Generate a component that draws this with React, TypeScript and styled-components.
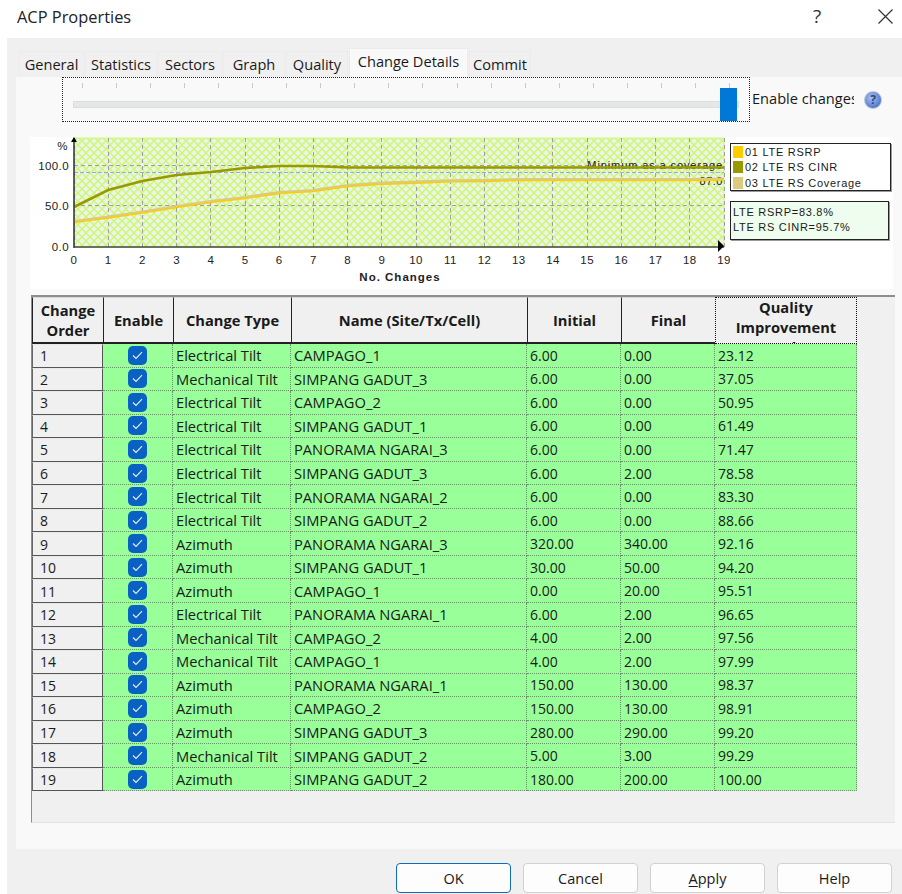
import React from "react";
import styled, { createGlobalStyle } from "styled-components";

const GlobalStyle = createGlobalStyle`
  html, body {
    margin: 0;
    padding: 0;
    background: #ffffff;
  }
  * {
    box-sizing: border-box;
  }
`;

const Dialog = styled.div`
  width: 902px;
  height: 894px;
  overflow: hidden;
  display: flex;
  flex-direction: column;
  font-family: "Open Sans", "Noto Sans", sans-serif;
  font-size: 14px;
  color: #1a1a1a;
`;

const TitleBar = styled.div`
  height: 38px;
  flex: none;
  display: flex;
  align-items: center;
  padding: 0 2px 6px 17px;
  font-size: 16.4px;
  color: #222;
`;

const Title = styled.div`
  flex: 1;
`;

const TitleButton = styled.div`
  width: 30px;
  height: 24px;
  margin-left: 38px;
  display: flex;
  align-items: center;
  justify-content: center;
  font-size: 19px;
  color: #333;
`;

const Body = styled.div`
  flex: 1;
  margin-left: 7px;
  padding: 10px 0 0 9px;
  background: #f0f0f0;
  display: flex;
  flex-direction: column;
`;

const TabStrip = styled.div`
  height: 29px;
  flex: none;
  display: flex;
  align-items: flex-end;
  padding-left: 3px;
  gap: 1px;
`;

const Tab = styled.div<{ $active?: boolean; $w: number }>`
  width: ${(p) => p.$w}px;
  height: ${(p) => (p.$active ? 29 : 26)}px;
  padding-bottom: ${(p) => (p.$active ? 4 : 2)}px;
  display: flex;
  align-items: center;
  justify-content: center;
  background: ${(p) => (p.$active ? "#f9f9f9" : "#f0f0f0")};
  border: 1px solid #ebebeb;
  border-bottom: none;
  font-size: 14.6px;
  white-space: nowrap;
`;

const Panel = styled.div`
  height: 772px;
  flex: none;
  background: #f9f9f9;
  display: flex;
  flex-direction: column;
`;

const SliderRow = styled.div`
  height: 45px;
  flex: none;
  display: flex;
  align-items: flex-start;
  padding-left: 46px;
`;

const SliderFrame = styled.div`
  width: 688px;
  height: 45px;
  border: 1px dotted #222;
  position: relative;
  padding: 5px 10px 0;
`;

const Ticks = styled.div`
  display: flex;
  justify-content: space-between;
  padding: 0 8px 0 9px;
  margin-right: 1px;
`;

const Tick = styled.span`
  width: 1px;
  height: 5px;
  background: #c8c8c8;
`;

const Track = styled.div`
  height: 7px;
  margin-top: 13px;
  background: #e6e7e7;
  border: 1px solid #dcdddd;
`;

const Thumb = styled.div`
  position: absolute;
  right: 12px;
  top: 10px;
  width: 17px;
  height: 33px;
  background: #0078d7;
`;

const EnableLabel = styled.div`
  width: 102px;
  margin: 11px 0 0 2px;
  overflow: hidden;
  white-space: nowrap;
  font-size: 14.6px;
`;

const HelpBadge = styled.div`
  width: 18px;
  height: 18px;
  margin: 14px 0 0 10px;
  border-radius: 50%;
  background: radial-gradient(circle at 40% 35%, #a9c2ee, #4f78c8 75%);
  border: 1px solid #b9c6dd;
  color: #2a4a8a;
  font-size: 12px;
  font-weight: 700;
  line-height: 16px;
  text-align: center;
`;

const ChartBand = styled.div`
  width: 863px;
  height: 152px;
  flex: none;
  margin: 15px 0 6px 14px;
  background: #ffffff;
  display: flex;
`;

const LegendColumn = styled.div`
  display: flex;
  flex-direction: column;
  gap: 10px;
  padding-top: 6px;
  font-family: "Liberation Sans", Arial, sans-serif;
  font-size: 11px;
  letter-spacing: 0.72px;
`;

const LegendBox = styled.div`
  width: 161px;
  height: 48px;
  padding: 0 0 0 2px;
  background: #ffffff;
  border: 1px solid #222;
  box-shadow: 1px 1px 0 #999;
`;

const LegendItem = styled.div`
  height: 15.6px;
  display: flex;
  align-items: center;
  gap: 2px;
  white-space: nowrap;
`;

const Swatch = styled.span<{ $color: string }>`
  width: 10px;
  height: 12px;
  background: ${(p) => p.$color};
`;

const ReadoutBox = styled.div`
  width: 159px;
  height: 39px;
  padding: 3px 0 0 2px;
  background: #eefdee;
  border: 1px solid #222;
  box-shadow: 1px 1px 0 #999;
  line-height: 15px;
  white-space: nowrap;
`;

const GridFrame = styled.div`
  height: 528px;
  flex: none;
  margin-left: 15px;
  margin-right: 7px;
  background: #f0f0f0;
  border-top: 2px solid #8e8e8e;
  border-left: 1px solid #8e8e8e;
  border-bottom: 1px solid #e2e2e2;
  display: flex;
  flex-direction: column;
`;

const GridRow = styled.div`
  display: grid;
  grid-template-columns: 71px 70px 118px 236px 94px 94px 142px;
  width: 825px;
`;

const HeaderCell = styled.div<{ $focus?: boolean }>`
  height: 47px;
  display: flex;
  align-items: ${(p) => (p.$focus ? "flex-start" : "center")};
  justify-content: center;
  overflow: hidden;
  padding: ${(p) => (p.$focus ? "0 4px" : "0 2px")};
  text-align: center;
  font-weight: 700;
  font-size: 14.7px;
  line-height: 20px;
  background: #f0f0f0;
  border-top: 1px solid #d8d8d8;
  border-left: 1px solid #222;
  border-bottom: 2px solid #222;
  ${(p) => p.$focus && "border: 1px dotted #111; border-bottom: 1px dotted #111;"}
`;

// the sort column's caption is taller than the header and runs under its edge
const OverflowCaption = styled.span`
  display: block;
  margin-top: -1px;
`;

const RowHead = styled.div`
  height: 23.55px;
  padding: 0 0 0 7px;
  display: flex;
  align-items: center;
  background: #f0f0f0;
  border-left: 1px solid #666;
  border-top: 1px solid #e8e8e8;
  border-bottom: 1px solid #555;
  border-right: 1px solid #555;
  font-size: 14px;
`;

const Cell = styled.div<{ $num?: boolean }>`
  height: 23.55px;
  padding: 0 0 0 3px;
  display: flex;
  align-items: center;
  overflow: hidden;
  white-space: nowrap;
  background: #99ff99;
  border-right: 1px dotted #6d8f6d;
  border-bottom: 1px dotted #6d8f6d;
  font-size: ${(p) => (p.$num ? 14 : 14.7)}px;
`;

const CheckCell = styled(Cell)`
  justify-content: center;
  padding: 0;
`;

const CheckMark = styled.span`
  width: 19px;
  height: 19px;
  display: flex;
  align-items: center;
  justify-content: center;
  border-radius: 5px;
  background: #0a61c4;
`;

const Footer = styled.div`
  flex: 1;
  display: flex;
  justify-content: flex-end;
  align-items: flex-end;
  gap: 12px;
  padding: 0 10px 1px 0;
`;

const DialogButton = styled.div<{ $primary?: boolean }>`
  width: 115px;
  height: 30px;
  display: flex;
  align-items: center;
  justify-content: center;
  background: #fdfdfd;
  border-radius: 4px;
  border: 1px solid ${(p) => (p.$primary ? "#0f6cbd" : "#d2d2d2")};
  font-size: 14.5px;
  u {
    text-underline-offset: 2px;
  }
`;

type Row = [string, string, string, string, string];

const ROWS: Row[] = [
  ["Electrical Tilt", "CAMPAGO_1", "6.00", "0.00", "23.12"],
  ["Mechanical Tilt", "SIMPANG GADUT_3", "6.00", "0.00", "37.05"],
  ["Electrical Tilt", "CAMPAGO_2", "6.00", "0.00", "50.95"],
  ["Electrical Tilt", "SIMPANG GADUT_1", "6.00", "0.00", "61.49"],
  ["Electrical Tilt", "PANORAMA NGARAI_3", "6.00", "0.00", "71.47"],
  ["Electrical Tilt", "SIMPANG GADUT_3", "6.00", "2.00", "78.58"],
  ["Electrical Tilt", "PANORAMA NGARAI_2", "6.00", "0.00", "83.30"],
  ["Electrical Tilt", "SIMPANG GADUT_2", "6.00", "0.00", "88.66"],
  ["Azimuth", "PANORAMA NGARAI_3", "320.00", "340.00", "92.16"],
  ["Azimuth", "SIMPANG GADUT_1", "30.00", "50.00", "94.20"],
  ["Azimuth", "CAMPAGO_1", "0.00", "20.00", "95.51"],
  ["Electrical Tilt", "PANORAMA NGARAI_1", "6.00", "2.00", "96.65"],
  ["Mechanical Tilt", "CAMPAGO_2", "4.00", "2.00", "97.56"],
  ["Mechanical Tilt", "CAMPAGO_1", "4.00", "2.00", "97.99"],
  ["Azimuth", "PANORAMA NGARAI_1", "150.00", "130.00", "98.37"],
  ["Azimuth", "CAMPAGO_2", "150.00", "130.00", "98.91"],
  ["Azimuth", "SIMPANG GADUT_3", "280.00", "290.00", "99.20"],
  ["Mechanical Tilt", "SIMPANG GADUT_2", "5.00", "3.00", "99.29"],
  ["Azimuth", "SIMPANG GADUT_2", "180.00", "200.00", "100.00"],
];

const TABS: [string, number][] = [
  ["General", 65],
  ["Statistics", 72],
  ["Sectors", 64],
  ["Graph", 62],
  ["Quality", 62],
  ["Change Details", 119],
  ["Commit", 62],
];

// plot coordinates: origin of the svg sits at the chart band's corner
const PLOT_L = 44;
const PLOT_R = 694;
const PLOT_T = 1;
const PLOT_B = 110;
const STEP = (PLOT_R - PLOT_L) / 19;

const CINR = [70, 53, 44, 38, 35, 31, 29, 29, 30.5, 30.5, 30.5, 30.5, 30.5, 30.5, 30.5, 30.5, 30.5, 30.5, 30.5, 30.5];
const RSRP = [84, 79.5, 74.5, 69, 64, 60, 55, 53, 48, 45.7, 44.7, 43.3, 43, 42, 42, 42, 42, 42, 42, 41.5];

const toPoints = (ys: number[]) =>
  ys.map((y, i) => `${PLOT_L + i * STEP},${y}`).join(" ");

const Chart = () => (
  <svg width="700" height="152" viewBox="0 0 700 152" style={{ flex: "none" }}>
    <defs>
      <pattern id="hatch" width="8" height="8" patternUnits="userSpaceOnUse">
        <rect width="8" height="8" fill="#eef2e8" />
        <path d="M0 0L8 8M8 0L0 8" stroke="#c8fa6e" strokeWidth="1.3" />
      </pattern>
    </defs>
    <rect x={PLOT_L} y={PLOT_T} width={PLOT_R - PLOT_L} height={PLOT_B - PLOT_T} fill="url(#hatch)" stroke="#c8fa6e" />
    <g shapeRendering="crispEdges">
      {Array.from({ length: 20 }, (_, i) => (
        <line key={i} x1={PLOT_L + i * STEP} x2={PLOT_L + i * STEP} y1={PLOT_T} y2={PLOT_B + 3} stroke="#a0a0a0" strokeDasharray="4 3" />
      ))}
      <line x1={PLOT_L} x2={PLOT_R} y1={28.5} y2={28.5} stroke="#a0a0a0" strokeDasharray="4 3" />
      <line x1={PLOT_L} x2={PLOT_R} y1={68.5} y2={68.5} stroke="#a0a0a0" strokeDasharray="4 3" />
      <line x1={PLOT_L} x2={PLOT_R} y1={35.5} y2={35.5} stroke="#9aa6f0" strokeDasharray="4 2" />
    </g>
    <g fontFamily="Liberation Sans, Arial, sans-serif" fontSize="11" fill="#222">
      <text x={PLOT_R - 1} y="32" textAnchor="end" letterSpacing="0.9">Minimum as a coverage</text>
      <text x={PLOT_R - 1} y="48" textAnchor="end" letterSpacing="0.5">87.0</text>
    </g>
    <polyline points={toPoints(RSRP)} transform="translate(0 1)" fill="none" stroke="#ffcc00" strokeWidth="2.4" />
    <polyline points={toPoints(RSRP)} fill="none" stroke="#dccb7e" strokeWidth="2.2" />
    <polyline points={toPoints(CINR)} fill="none" stroke="#999900" strokeWidth="2.6" />
    <line x1={PLOT_L} x2={PLOT_L} y1={PLOT_T} y2={PLOT_B + 1} stroke="#333" strokeWidth="1.5" />
    <line x1={PLOT_L} x2={PLOT_R} y1={PLOT_B} y2={PLOT_B} stroke="#444" strokeWidth="1.5" />
    <path d={`M${PLOT_L - 3} 5L${PLOT_L} 0L${PLOT_L + 3} 5Z`} fill="#000" />
    <path d={`M${PLOT_R - 6} 103L${PLOT_R} 109L${PLOT_R - 6} 115Z`} fill="#000" />
    <g fontFamily="Liberation Sans, Arial, sans-serif" fontSize="11.5" fill="#222" letterSpacing="0.4">
      <text x={PLOT_L - 6} y="13" textAnchor="end">%</text>
      <text x={PLOT_L - 5} y="33" textAnchor="end">100.0</text>
      <text x={PLOT_L - 5} y="73" textAnchor="end">50.0</text>
      <text x={PLOT_L - 5} y="114" textAnchor="end">0.0</text>
      {Array.from({ length: 20 }, (_, i) => (
        <text key={i} x={PLOT_L + i * STEP} y="127" textAnchor="middle">{i}</text>
      ))}
      <text x="370" y="144" textAnchor="middle" fontWeight="700" letterSpacing="1">No. Changes</text>
    </g>
  </svg>
);

const Check = () => (
  <CheckMark>
    <svg width="11" height="9" viewBox="0 0 11 9">
      <path d="M1 4.5L4 7.5L10 1.2" fill="none" stroke="#e8f1fb" strokeWidth="1.1" />
    </svg>
  </CheckMark>
);

export default function App() {
  return (
    <Dialog>
      <GlobalStyle />
      <TitleBar>
        <Title>ACP Properties</Title>
        <TitleButton>?</TitleButton>
        <TitleButton>
          <svg width="15" height="15" viewBox="0 0 15 15">
            <path d="M0.5 0.5L14.5 14.5M14.5 0.5L0.5 14.5" stroke="#333" strokeWidth="1.2" />
          </svg>
        </TitleButton>
      </TitleBar>
      <Body>
        <TabStrip>
          {TABS.map(([name, w]) => (
            <Tab key={name} $w={w} $active={name === "Change Details"}>
              {name}
            </Tab>
          ))}
        </TabStrip>
        <Panel>
          <SliderRow>
            <SliderFrame>
              <Ticks>
                {Array.from({ length: 20 }, (_, i) => (
                  <Tick key={i} />
                ))}
              </Ticks>
              <Track />
              <Thumb />
            </SliderFrame>
            <EnableLabel>Enable changes</EnableLabel>
            <HelpBadge>?</HelpBadge>
          </SliderRow>
          <ChartBand>
            <Chart />
            <LegendColumn>
              <LegendBox>
                <LegendItem><Swatch $color="#ffcc00" />01 LTE RSRP</LegendItem>
                <LegendItem><Swatch $color="#999900" />02 LTE RS CINR</LegendItem>
                <LegendItem><Swatch $color="#dccb7e" />03 LTE RS Coverage</LegendItem>
              </LegendBox>
              <ReadoutBox>
                LTE RSRP=83.8%
                <br />
                LTE RS CINR=95.7%
              </ReadoutBox>
            </LegendColumn>
          </ChartBand>
          <GridFrame>
            <GridRow>
              <HeaderCell>Change Order</HeaderCell>
              <HeaderCell>Enable</HeaderCell>
              <HeaderCell>Change Type</HeaderCell>
              <HeaderCell>Name (Site/Tx/Cell)</HeaderCell>
              <HeaderCell>Initial</HeaderCell>
              <HeaderCell>Final</HeaderCell>
              <HeaderCell $focus>
                <OverflowCaption>Quality Improvement Total %</OverflowCaption>
              </HeaderCell>
            </GridRow>
            {ROWS.map((r, i) => (
              <GridRow key={i}>
                <RowHead>{i + 1}</RowHead>
                <CheckCell><Check /></CheckCell>
                {r.map((v, j) => (
                  <Cell key={j} $num={j > 1}>{v}</Cell>
                ))}
              </GridRow>
            ))}
          </GridFrame>
        </Panel>
        <Footer>
          <DialogButton $primary>OK</DialogButton>
          <DialogButton>Cancel</DialogButton>
          <DialogButton><span><u>A</u>pply</span></DialogButton>
          <DialogButton>Help</DialogButton>
        </Footer>
      </Body>
    </Dialog>
  );
}
